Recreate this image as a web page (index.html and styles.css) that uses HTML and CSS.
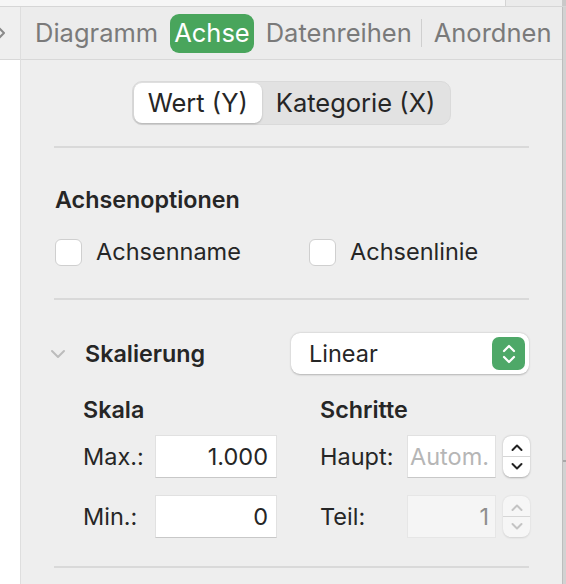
FILE: index.html
```html
<!DOCTYPE html>
<html lang="de">
<head>
<meta charset="utf-8">
<link rel="stylesheet" href="styles.css">
</head>
<body>
<div class="window">
  <div class="topstrip">
    <div class="top-left"></div>
    <div class="top-right"></div>
  </div>
  <div class="body-row">
    <div class="sidebar">
      <div class="sidebar-head">
        <svg class="side-chev" width="8" height="14" viewBox="0 0 8 14"><path d="M0 2 L5 7 L0 12" fill="none" stroke="#8a8a8a" stroke-width="2" stroke-linecap="round" stroke-linejoin="round"/></svg>
      </div>
    </div>
    <div class="main">
      <div class="tabs">
        <span class="tab">Diagramm</span>
        <span class="tab active">Achse</span>
        <span class="tab">Datenreihen</span>
        <span class="tab-sep"></span>
        <span class="tab">Anordnen</span>
      </div>
      <div class="panel">
        <div class="seg-wrap">
          <div class="segmented">
            <span class="seg selected">Wert (Y)</span>
            <span class="seg">Kategorie (X)</span>
          </div>
        </div>
        <div class="rule"></div>
        <div class="section options">
          <div class="heading">Achsenoptionen</div>
          <div class="checks">
            <label class="check"><span class="box"></span>Achsenname</label>
            <label class="check"><span class="box"></span>Achsenlinie</label>
          </div>
        </div>
        <div class="rule"></div>
        <div class="section scaling">
          <div class="scale-row">
            <div class="scale-title">
              <svg class="disclosure" width="16" height="10" viewBox="0 0 16 10"><path d="M2 2 L8 8 L14 2" fill="none" stroke="#bcbcbc" stroke-width="2" stroke-linecap="round" stroke-linejoin="round"/></svg>
              <span class="heading">Skalierung</span>
            </div>
            <div class="popup">
              <span>Linear</span>
              <span class="popup-arrows">
                <svg width="16" height="24" viewBox="0 0 16 24"><path d="M3 9 L8 4 L13 9" fill="none" stroke="#fff" stroke-width="2.2" stroke-linecap="round" stroke-linejoin="round"/><path d="M3 15 L8 20 L13 15" fill="none" stroke="#fff" stroke-width="2.2" stroke-linecap="round" stroke-linejoin="round"/></svg>
              </span>
            </div>
          </div>
          <div class="fields">
            <div class="col">
              <div class="heading sub">Skala</div>
              <div class="field-row">
                <span class="flabel">Max.:</span>
                <span class="input">1.000</span>
              </div>
              <div class="field-row">
                <span class="flabel">Min.:</span>
                <span class="input">0</span>
              </div>
            </div>
            <div class="col">
              <div class="heading sub">Schritte</div>
              <div class="field-row">
                <span class="flabel short">Haupt:</span>
                <span class="input small placeholder">Autom.</span>
                <span class="stepper">
                  <svg width="14" height="36" viewBox="0 0 14 36"><path d="M2.5 11 L7 6.5 L11.5 11" fill="none" stroke="#222" stroke-width="2" stroke-linecap="round" stroke-linejoin="round"/><path d="M2.5 25 L7 29.5 L11.5 25" fill="none" stroke="#222" stroke-width="2" stroke-linecap="round" stroke-linejoin="round"/></svg>
                </span>
              </div>
              <div class="field-row">
                <span class="flabel short">Teil:</span>
                <span class="input small disabled">1</span>
                <span class="stepper disabled">
                  <svg width="14" height="36" viewBox="0 0 14 36"><path d="M2.5 11 L7 6.5 L11.5 11" fill="none" stroke="#c4c4c4" stroke-width="2" stroke-linecap="round" stroke-linejoin="round"/><path d="M2.5 25 L7 29.5 L11.5 25" fill="none" stroke="#c4c4c4" stroke-width="2" stroke-linecap="round" stroke-linejoin="round"/></svg>
                </span>
              </div>
            </div>
          </div>
        </div>
        <div class="rule"></div>
      </div>
    </div>
    <div class="edge"><span class="edge-mark"></span></div>
  </div>
</div>
</body>
</html>
```
FILE: styles.css
```css
* { box-sizing: border-box; }
html, body { margin: 0; padding: 0; }
body {
  width: 566px;
  height: 584px;
  overflow: hidden;
  font-family: Inter, "Noto Sans", sans-serif;
  color: #262626;
  background: #eeeeee;
}
.window { display: flex; flex-direction: column; height: 584px; }
.topstrip {
  height: 7px;
  display: flex;
  border-bottom: 1px solid #d6d6d6;
  flex: none;
}
.top-left { flex: 1; background: #f6f6f6; }
.top-right { width: 61px; background: #ebebeb; border-left: 1px solid #d4d4d4; border-right: 4px solid #c9c9c9; }
.body-row { flex: 1; display: flex; min-width: 0; }
.sidebar {
  width: 21px;
  background: #ffffff;
  border-right: 1px solid #dedede;
  flex: none;
}
.sidebar-head {
  height: 53px;
  background: #efefef;
  border-bottom: 1px solid #d8d8d8;
  display: flex;
  align-items: center;
}
.side-chev { margin-left: -1px; }
.main { flex: 1; min-width: 0; display: flex; flex-direction: column; }
.edge {
  width: 4px;
  background: #d2d2d2;
  border-left: 1px solid #bdbdbd;
  flex: none;
  position: relative;
}
.edge-mark {
  position: absolute;
  left: 0; right: 0;
  top: 453px;
  height: 2px;
  background: #a8a8a8;
}
.tabs {
  height: 53px;
  background: #ececec;
  border-bottom: 1px solid #d8d8d8;
  display: flex;
  align-items: center;
  padding-left: 6px;
  font-size: 25.5px;
  color: #7a7a7a;
  flex: none;
}
.tab { padding: 3px 5px 4px; margin: 0 3px; line-height: 32px; border-radius: 9px; white-space: nowrap; }
.tab.active { background: #49a55c; color: #ffffff; padding: 3px 4px 4px; margin: 0 4px; }
.tab-sep { width: 1px; height: 28px; background: #cfcfcf; margin: 0 4px 0 1px; }
.panel { flex: 1; padding: 0 33px; }
.seg-wrap { display: flex; justify-content: center; padding: 21px 0; }
.segmented {
  display: flex;
  background: #e2e2e2;
  border-radius: 10px;
  padding: 1px;
  border: 1px solid #dadada;
}
.seg { font-size: 25.5px; line-height: 40px; padding: 0 14px; color: #262626; white-space: nowrap; }
.seg.selected {
  background: #ffffff;
  border-radius: 8px;
  box-shadow: 0 1px 2px rgba(0,0,0,0.22);
}
.rule { height: 2px; background: #d9d9d9; }
.heading { font-weight: 600; font-size: 23.3px; line-height: 28px; color: #262626; }
.section.options { padding: 38px 0 32px 1px; }
.checks { display: flex; margin-top: 24px; }
.check { display: flex; align-items: center; font-size: 23.5px; line-height: 28px; white-space: nowrap; }
.check:first-child { width: 254px; }
.box {
  width: 27px; height: 27px;
  background: #fff;
  border: 1px solid #cfcfcf;
  border-radius: 6px;
  margin-right: 14px;
  flex: none;
}
.section.scaling { padding: 33px 0 28px 0; }
.scale-row { display: flex; align-items: center; justify-content: space-between; }
.scale-title { display: flex; align-items: center; }
.disclosure { margin: 0 19px 0 -4px; }
.popup {
  width: 238px;
  height: 41px;
  background: #fff;
  border-radius: 9px;
  box-shadow: 0 0.5px 2px rgba(0,0,0,0.25);
  display: flex;
  align-items: center;
  justify-content: space-between;
  padding: 0 4px 0 18px;
  font-size: 23.5px;
}
.popup-arrows {
  width: 33px; height: 33px;
  background: #4ea868;
  border-radius: 7px;
  display: flex; align-items: center; justify-content: center;
}
.fields { display: flex; padding: 22px 0 0 29px; }
.col { width: 237px; flex: none; }
.col + .col { width: auto; }
.heading.sub { margin-bottom: 11px; }
.field-row { display: flex; align-items: center; height: 43px; }
.field-row + .field-row { margin-top: 17px; }
.flabel { font-size: 23.5px; width: 72px; flex: none; }
.flabel.short { width: 87px; }
.input {
  width: 122px;
  height: 43px;
  background: #fff;
  border: 1px solid #e1e1e1;
  border-bottom-color: #c8c8c8;
  font-size: 23.5px;
  line-height: 41px;
  text-align: right;
  padding-right: 8px;
  flex: none;
}
.input.small { width: 89px; padding-right: 6px; }
.input.placeholder { color: #b6b6b6; }
.input.disabled { background: #f5f5f5; color: #8e8e8e; border-color: #e6e6e6; }
.stepper {
  width: 27px; height: 41px;
  margin-left: 7px;
  background: #fff;
  border-radius: 8px;
  box-shadow: 0 0.5px 2px rgba(0,0,0,0.28);
  display: flex; align-items: center; justify-content: center;
  position: relative;
  flex: none;
}
.stepper::after {
  content: "";
  position: absolute; left: 0; right: 0; top: 20px; height: 1px; background: #d6d6d6;
}
.stepper.disabled { background: #f6f6f6; box-shadow: 0 0.5px 2px rgba(0,0,0,0.12); }
```
